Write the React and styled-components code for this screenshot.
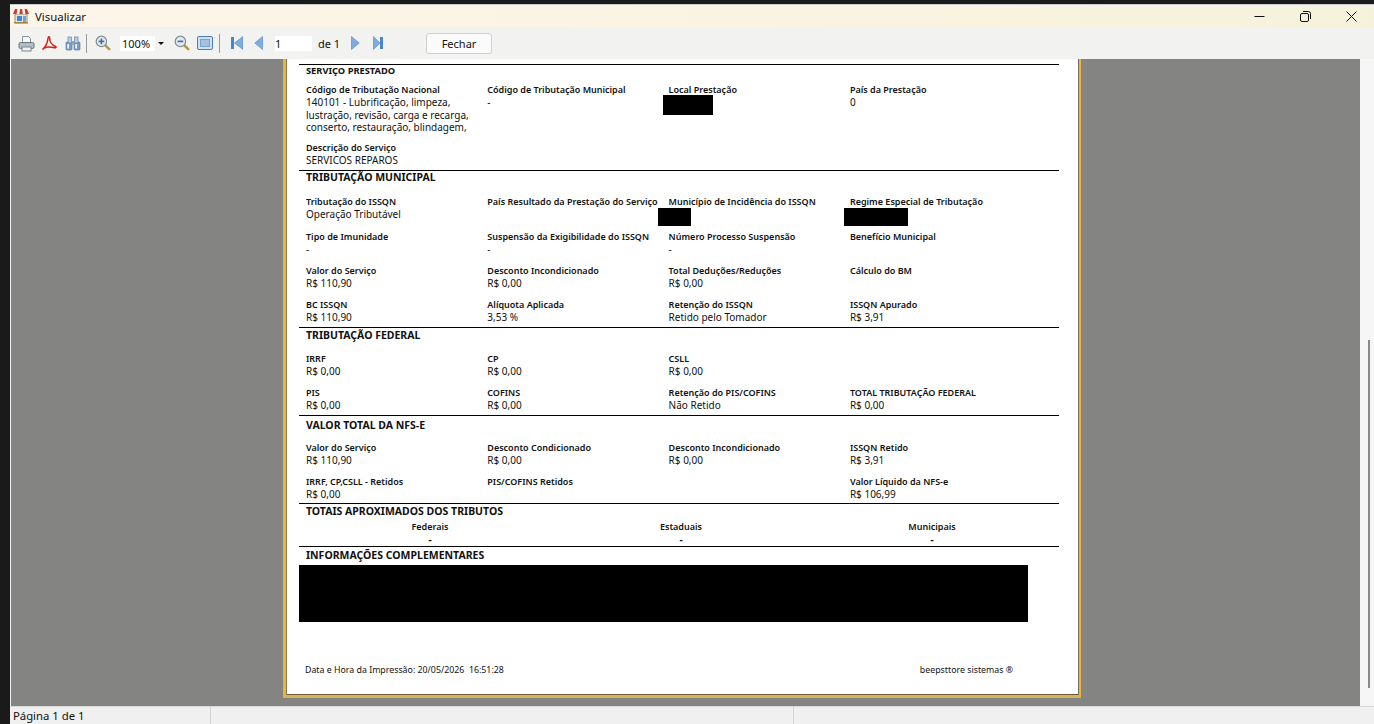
import React from 'react';
import styled, { createGlobalStyle } from 'styled-components';

const GlobalStyle = createGlobalStyle`
  html, body { margin: 0; padding: 0; height: 100%; background: #1a1a1a; overflow: hidden; }
  #root { height: 100%; }
`;

const Screen = styled.div`
  width: 1374px;
  height: 724px;
  padding: 4px 0 0 10px;
  box-sizing: border-box;
  overflow: hidden;
`;

const Win = styled.div`
  height: 720px;
  display: flex;
  flex-direction: column;
  background: #f2f2f0;
  font-family: "Noto Sans", "Open Sans", sans-serif;
  color: #111;
`;

const TitleBar = styled.div`
  height: 23px;
  display: flex;
  align-items: center;
  padding-left: 3px;
  background: linear-gradient(90deg, #fdf5e9 0%, #fbf3e2 50%, #f5f2dc 100%);
  border-top: 1px solid #c8ccd0;
  box-sizing: border-box;
`;

const WinTitle = styled.span`
  margin-left: 6px;
  font-size: 11.4px;
  flex: 1;
`;

const WinButton = styled.div`
  width: 46px;
  height: 100%;
  display: flex;
  align-items: center;
  justify-content: center;
`;

const Toolbar = styled.div`
  height: 32px;
  display: flex;
  align-items: center;
  padding-left: 8px;
  background: #f2f2f0;
`;

const ToolIcon = styled.div`
  display: flex;
  margin-left: ${p => p.$gap || 0}px;
`;

const ToolSep = styled.div`
  width: 1px;
  height: 19px;
  background: #9a9a9a;
  margin-left: ${p => p.$gap}px;
`;

const ZoomCombo = styled.div`
  width: 47px;
  height: 15px;
  margin-left: 9px;
  display: flex;
  background: #fff;
  font-size: 11px;
  line-height: 16px;
  padding-left: 2px;
  box-sizing: border-box;
`;

const ComboText = styled.span`
  width: 33px;
`;

const ComboArrow = styled.div`
  width: 12px;
  display: flex;
  align-items: center;
  justify-content: center;
  background: #f2f2f0;
  &::after {
    content: '';
    border-left: 3px solid transparent;
    border-right: 3px solid transparent;
    border-top: 3px solid #111;
  }
`;

const PageInput = styled.div`
  width: 37px;
  height: 15px;
  margin-left: 12px;
  background: #fff;
  font-size: 11px;
  line-height: 16px;
  box-sizing: border-box;
`;

const PageOf = styled.span`
  margin-left: 6px;
  font-size: 11px;
  width: 22px;
  white-space: nowrap;
`;

const CloseButton = styled.button`
  width: 66px;
  height: 21px;
  margin-left: 43px;
  padding: 0;
  background: #fbfbfb;
  border: 1px solid #d0d0d0;
  border-radius: 3px;
  font-family: inherit;
  font-size: 11px;
  color: #111;
`;

const Middle = styled.div`
  flex: 1;
  min-height: 0;
  display: flex;
`;

const Viewer = styled.div`
  flex: 1;
  margin-left: 1px;
  background: #848482;
  padding-left: 272px;
`;

const ScrollTrack = styled.div`
  width: 14px;
  background: #f6f6f6;
  padding: 281px 0 0 8px;
  box-sizing: border-box;
`;

const ScrollThumb = styled.div`
  width: 2px;
  height: 348px;
  background: #8a8a8a;
`;

const Page = styled.div`
  width: 798px;
  height: 639px;
  box-sizing: border-box;
  background: #fff;
  border-left: 3px solid #e9b634;
  border-right: 2px solid #f0b52e;
  border-bottom: 3px solid #d8b15f;
  box-shadow: inset 1px 0 0 #8a7a58, inset -1px 0 0 #6f6f6f, inset 0 -1px 0 #6f5a35;
  padding: 5px 0 0 13px;
`;

const Section = styled.section`
  width: 760px;
  height: ${p => p.$h}px;
  box-sizing: border-box;
  border-top: 1px solid #000;
`;

const SectionTitle = styled.h2`
  margin: ${p => p.$top || 0}px 0 ${p => p.$bottom}px 7px;
  font-size: ${p => (p.$small ? 9.3 : 10.5)}px;
  line-height: 12px;
  font-weight: 700;
  white-space: nowrap;
`;

const FieldRow = styled.div`
  display: grid;
  grid-template-columns: repeat(4, 181.3px);
  height: ${p => p.$h}px;
  padding-left: 7px;
`;

const Field = styled.div`
  position: relative;
  white-space: nowrap;
`;

const Label = styled.div`
  font-size: 9px;
  line-height: 13px;
  font-weight: 600;
`;

const Value = styled.div`
  font-size: 10px;
  line-height: 12.5px;
`;

const Redaction = styled.div`
  position: absolute;
  left: ${p => p.$left}px;
  top: ${p => p.$top}px;
  width: ${p => p.$w}px;
  height: ${p => p.$hh}px;
  background: #000;
`;

const TotalsRow = styled.div`
  display: grid;
  grid-template-columns: repeat(3, 251px);
  padding-left: 5.5px;
  text-align: center;
`;

const TotalValue = styled(Value)`
  font-weight: 700;
`;

const NotesBlock = styled.div`
  width: 729px;
  height: 57px;
  margin-top: 4px;
  background: #000;
`;

const PrintFooter = styled.div`
  width: 708px;
  margin: 42px 0 0 6px;
  display: flex;
  justify-content: space-between;
  font-size: 8.8px;
  line-height: 12px;
  white-space: pre;
`;

const StatusBar = styled.div`
  height: 18px;
  display: flex;
  background: #f0f0f0;
  border-top: 1px solid #d8d8d8;
  box-sizing: border-box;
  font-size: 11.3px;
  line-height: 18px;
`;

const StatusCell = styled.div`
  width: ${p => p.$w}px;
  padding-left: 3px;
  box-sizing: border-box;
  border-right: 1px solid #d4d4d4;
`;

const StoreIcon = () => (
  <svg width="16" height="16" viewBox="0 0 16 16">
    <rect x="2" y="6" width="12" height="9" fill="#e8e4d8" stroke="#8c7a50" strokeWidth="0.8" />
    <rect x="4" y="8" width="5" height="5" fill="#3f86d8" />
    <rect x="10" y="8" width="3" height="7" fill="#6aa5e0" />
    <path d="M2 1h12l2 5H0z" fill="#fff" />
    <path d="M2 1h2.4l-.8 5H0zM7 1h2.2l.6 5H6.3zM11.6 1H14l2 5h-3.6z" fill="#d8382c" />
    <rect x="1" y="14" width="14" height="1.4" fill="#a8843c" />
  </svg>
);

const PrintIcon = () => (
  <svg width="17" height="17" viewBox="0 0 17 17">
    <path d="M4.5 1.5h6l2 2v5h-8z" fill="#f4f6f8" stroke="#8a949e" />
    <rect x="1" y="7.5" width="15" height="6" rx="1.5" fill="#b4bcc4" stroke="#6c7680" />
    <rect x="4" y="12" width="9" height="4" fill="#eef0f2" stroke="#7c8690" />
  </svg>
);

const PdfIcon = () => (
  <svg width="16" height="16" viewBox="0 0 16 16">
    <path d="M1.5 14.5C4 13 6.5 8 7 3.5 7.2 1.2 8.6 1.2 8.6 3c0 3 2 7 6 8.5 1 .5.2 1.6-1.2 1.2C10 12 5 12 3.5 13.2" fill="none" stroke="#d8201c" strokeWidth="1.5" />
  </svg>
);

const BinocularsIcon = () => (
  <svg width="16" height="16" viewBox="0 0 16 16">
    <rect x="1" y="7" width="6" height="8" rx="1" fill="#7d9fc4" stroke="#4f7199" strokeWidth="0.6" />
    <rect x="9" y="7" width="6" height="8" rx="1" fill="#7d9fc4" stroke="#4f7199" strokeWidth="0.6" />
    <rect x="3" y="2" width="3.6" height="6" fill="#bcd0e2" stroke="#4f7199" strokeWidth="0.6" />
    <rect x="9.4" y="2" width="3.6" height="6" fill="#bcd0e2" stroke="#4f7199" strokeWidth="0.6" />
    <rect x="6.6" y="6" width="2.8" height="4" fill="#8fa6bc" />
    <rect x="2.2" y="9" width="1.8" height="4.5" fill="#e6eef5" />
    <rect x="10.2" y="9" width="1.8" height="4.5" fill="#e6eef5" />
  </svg>
);

const ZoomIcon = ({ plus }) => (
  <svg width="16" height="16" viewBox="0 0 16 16">
    <path d="M9.8 9.8l4.4 4.4" stroke="#b8983c" strokeWidth="2.6" strokeLinecap="round" />
    <circle cx="6.4" cy="6.4" r="5.2" fill="#dfe8f0" stroke="#7d8c9a" strokeWidth="1.2" />
    <rect x="3.6" y="5.6" width="5.6" height="1.6" fill="#4a6c8e" />
    {plus && <rect x="5.6" y="3.6" width="1.6" height="5.6" fill="#4a6c8e" />}
  </svg>
);

const PageViewIcon = () => (
  <svg width="16" height="14" viewBox="0 0 16 14">
    <rect x="0.5" y="0.5" width="15" height="13" rx="1.5" fill="#cfe0f2" stroke="#4f7cb2" />
    <rect x="3" y="3" width="10" height="8" fill="#7aa3d2" />
    <path d="M4 5h8M4 7h8M4 9h8" stroke="#e6eff8" strokeWidth="0.8" />
  </svg>
);

const FirstIcon = () => (
  <svg width="12" height="14" viewBox="0 0 12 14">
    <rect x="0" y="1" width="3" height="12" fill="#4a84cf" />
    <path d="M12 0.5v13L3.5 7z" fill="#7fadE0" stroke="#4a84cf" strokeWidth="0.6" />
  </svg>
);

const PrevIcon = () => (
  <svg width="9" height="14" viewBox="0 0 9 14">
    <path d="M8.5 0.5v13L0.8 7z" fill="#7fadE0" stroke="#4a84cf" strokeWidth="0.6" />
  </svg>
);

const NextIcon = () => (
  <svg width="9" height="14" viewBox="0 0 9 14">
    <path d="M0.5 0.5v13L8.2 7z" fill="#7fadE0" stroke="#4a84cf" strokeWidth="0.6" />
  </svg>
);

const LastIcon = () => (
  <svg width="10" height="14" viewBox="0 0 10 14">
    <path d="M0.4 0.5v13L7 7z" fill="#7fadE0" stroke="#4a84cf" strokeWidth="0.6" />
    <rect x="7" y="1" width="3" height="12" fill="#4a84cf" />
  </svg>
);

const Item = ({ label, children, mark }) => (
  <Field>
    <Label>{label}</Label>
    {children && <Value>{children}</Value>}
    {mark}
  </Field>
);

export default function App() {
  return (
    <Screen>
      <GlobalStyle />
      <Win>
        <TitleBar>
          <StoreIcon />
          <WinTitle>Visualizar</WinTitle>
          <WinButton>
            <svg width="11" height="11" viewBox="0 0 11 11"><path d="M0.5 5.5h10" stroke="#111" /></svg>
          </WinButton>
          <WinButton>
            <svg width="11" height="11" viewBox="0 0 11 11" fill="none" stroke="#111"><rect x="0.5" y="2.5" width="8" height="8" rx="1.5" /><path d="M3 0.5h5.5a2 2 0 0 1 2 2V8" /></svg>
          </WinButton>
          <WinButton>
            <svg width="11" height="11" viewBox="0 0 11 11"><path d="M0.5 0.5l10 10M10.5 0.5l-10 10" stroke="#111" /></svg>
          </WinButton>
        </TitleBar>

        <Toolbar>
          <ToolIcon><PrintIcon /></ToolIcon>
          <ToolIcon $gap={6}><PdfIcon /></ToolIcon>
          <ToolIcon $gap={8}><BinocularsIcon /></ToolIcon>
          <ToolSep $gap={5} />
          <ToolIcon $gap={8}><ZoomIcon plus /></ToolIcon>
          <ZoomCombo>
            <ComboText>100%</ComboText>
            <ComboArrow />
          </ZoomCombo>
          <ToolIcon $gap={7}><ZoomIcon /></ToolIcon>
          <ToolIcon $gap={7}><PageViewIcon /></ToolIcon>
          <ToolSep $gap={6} />
          <ToolIcon $gap={11}><FirstIcon /></ToolIcon>
          <ToolIcon $gap={11}><PrevIcon /></ToolIcon>
          <PageInput>1</PageInput>
          <PageOf>de 1</PageOf>
          <ToolIcon $gap={11}><NextIcon /></ToolIcon>
          <ToolIcon $gap={13}><LastIcon /></ToolIcon>
          <CloseButton>Fechar</CloseButton>
        </Toolbar>

        <Middle>
          <Viewer>
            <Page>
              <Section $h={106}>
                <SectionTitle $small $bottom={6}>SERVIÇO PRESTADO</SectionTitle>
                <FieldRow $h={58}>
                  <Item label="Código de Tributação Nacional">
                    140101 - Lubrificação, limpeza,<br />lustração, revisão, carga e recarga,<br />conserto, restauração, blindagem,
                  </Item>
                  <Item label="Código de Tributação Municipal">-</Item>
                  <Item label="Local Prestação" mark={<Redaction $left={-6} $top={12} $w={50} $hh={20} />} />
                  <Item label="País da Prestação">0</Item>
                </FieldRow>
                <FieldRow $h={26}>
                  <Item label="Descrição do Serviço">SERVICOS REPAROS</Item>
                </FieldRow>
              </Section>

              <Section $h={157}>
                <SectionTitle $bottom={12}>TRIBUTAÇÃO MUNICIPAL</SectionTitle>
                <FieldRow $h={35}>
                  <Item label="Tributação do ISSQN">Operação Tributável</Item>
                  <Item label="País Resultado da Prestação do Serviço" />
                  <Item label="Município de Incidência do ISSQN" mark={<Redaction $left={-11} $top={13} $w={33} $hh={18} />} />
                  <Item label="Regime Especial de Tributação" mark={<Redaction $left={-6} $top={13} $w={64} $hh={18} />} />
                </FieldRow>
                <FieldRow $h={34}>
                  <Item label="Tipo de Imunidade">-</Item>
                  <Item label="Suspensão da Exigibilidade do ISSQN">-</Item>
                  <Item label="Número Processo Suspensão">-</Item>
                  <Item label="Benefício Municipal" />
                </FieldRow>
                <FieldRow $h={34}>
                  <Item label="Valor do Serviço">R$ 110,90</Item>
                  <Item label="Desconto Incondicionado">R$ 0,00</Item>
                  <Item label="Total Deduções/Reduções">R$ 0,00</Item>
                  <Item label="Cálculo do BM" />
                </FieldRow>
                <FieldRow $h={30}>
                  <Item label="BC ISSQN">R$ 110,90</Item>
                  <Item label="Alíquota Aplicada">3,53 %</Item>
                  <Item label="Retenção do ISSQN">Retido pelo Tomador</Item>
                  <Item label="ISSQN Apurado">R$ 3,91</Item>
                </FieldRow>
              </Section>

              <Section $h={88}>
                <SectionTitle $top={1} $bottom={11}>TRIBUTAÇÃO FEDERAL</SectionTitle>
                <FieldRow $h={34}>
                  <Item label="IRRF">R$ 0,00</Item>
                  <Item label="CP">R$ 0,00</Item>
                  <Item label="CSLL">R$ 0,00</Item>
                </FieldRow>
                <FieldRow $h={30}>
                  <Item label="PIS">R$ 0,00</Item>
                  <Item label="COFINS">R$ 0,00</Item>
                  <Item label="Retenção do PIS/COFINS">Não Retido</Item>
                  <Item label="TOTAL TRIBUTAÇÃO FEDERAL">R$ 0,00</Item>
                </FieldRow>
              </Section>

              <Section $h={88}>
                <SectionTitle $top={3} $bottom={10}>VALOR TOTAL DA NFS-E</SectionTitle>
                <FieldRow $h={34}>
                  <Item label="Valor do Serviço">R$ 110,90</Item>
                  <Item label="Desconto Condicionado">R$ 0,00</Item>
                  <Item label="Desconto Incondicionado">R$ 0,00</Item>
                  <Item label="ISSQN Retido">R$ 3,91</Item>
                </FieldRow>
                <FieldRow $h={28}>
                  <Item label="IRRF, CP,CSLL - Retidos">R$ 0,00</Item>
                  <Item label="PIS/COFINS Retidos" />
                  <Field />
                  <Item label="Valor Líquido da NFS-e">R$ 106,99</Item>
                </FieldRow>
              </Section>

              <Section $h={43}>
                <SectionTitle $top={1} $bottom={3}>TOTAIS APROXIMADOS DOS TRIBUTOS</SectionTitle>
                <TotalsRow>
                  <div><Label>Federais</Label><TotalValue>-</TotalValue></div>
                  <div><Label>Estaduais</Label><TotalValue>-</TotalValue></div>
                  <div><Label>Municipais</Label><TotalValue>-</TotalValue></div>
                </TotalsRow>
              </Section>

              <Section $h={76}>
                <SectionTitle $top={2} $bottom={0}>INFORMAÇÕES COMPLEMENTARES</SectionTitle>
                <NotesBlock />
              </Section>

              <PrintFooter>
                <span>Data e Hora da Impressão: 20/05/2026  16:51:28</span>
                <span>beepsttore sistemas ®</span>
              </PrintFooter>
            </Page>
          </Viewer>
          <ScrollTrack><ScrollThumb /></ScrollTrack>
        </Middle>

        <StatusBar>
          <StatusCell $w={201}>Página 1 de 1</StatusCell>
          <StatusCell $w={583} />
        </StatusBar>
      </Win>
    </Screen>
  );
}
